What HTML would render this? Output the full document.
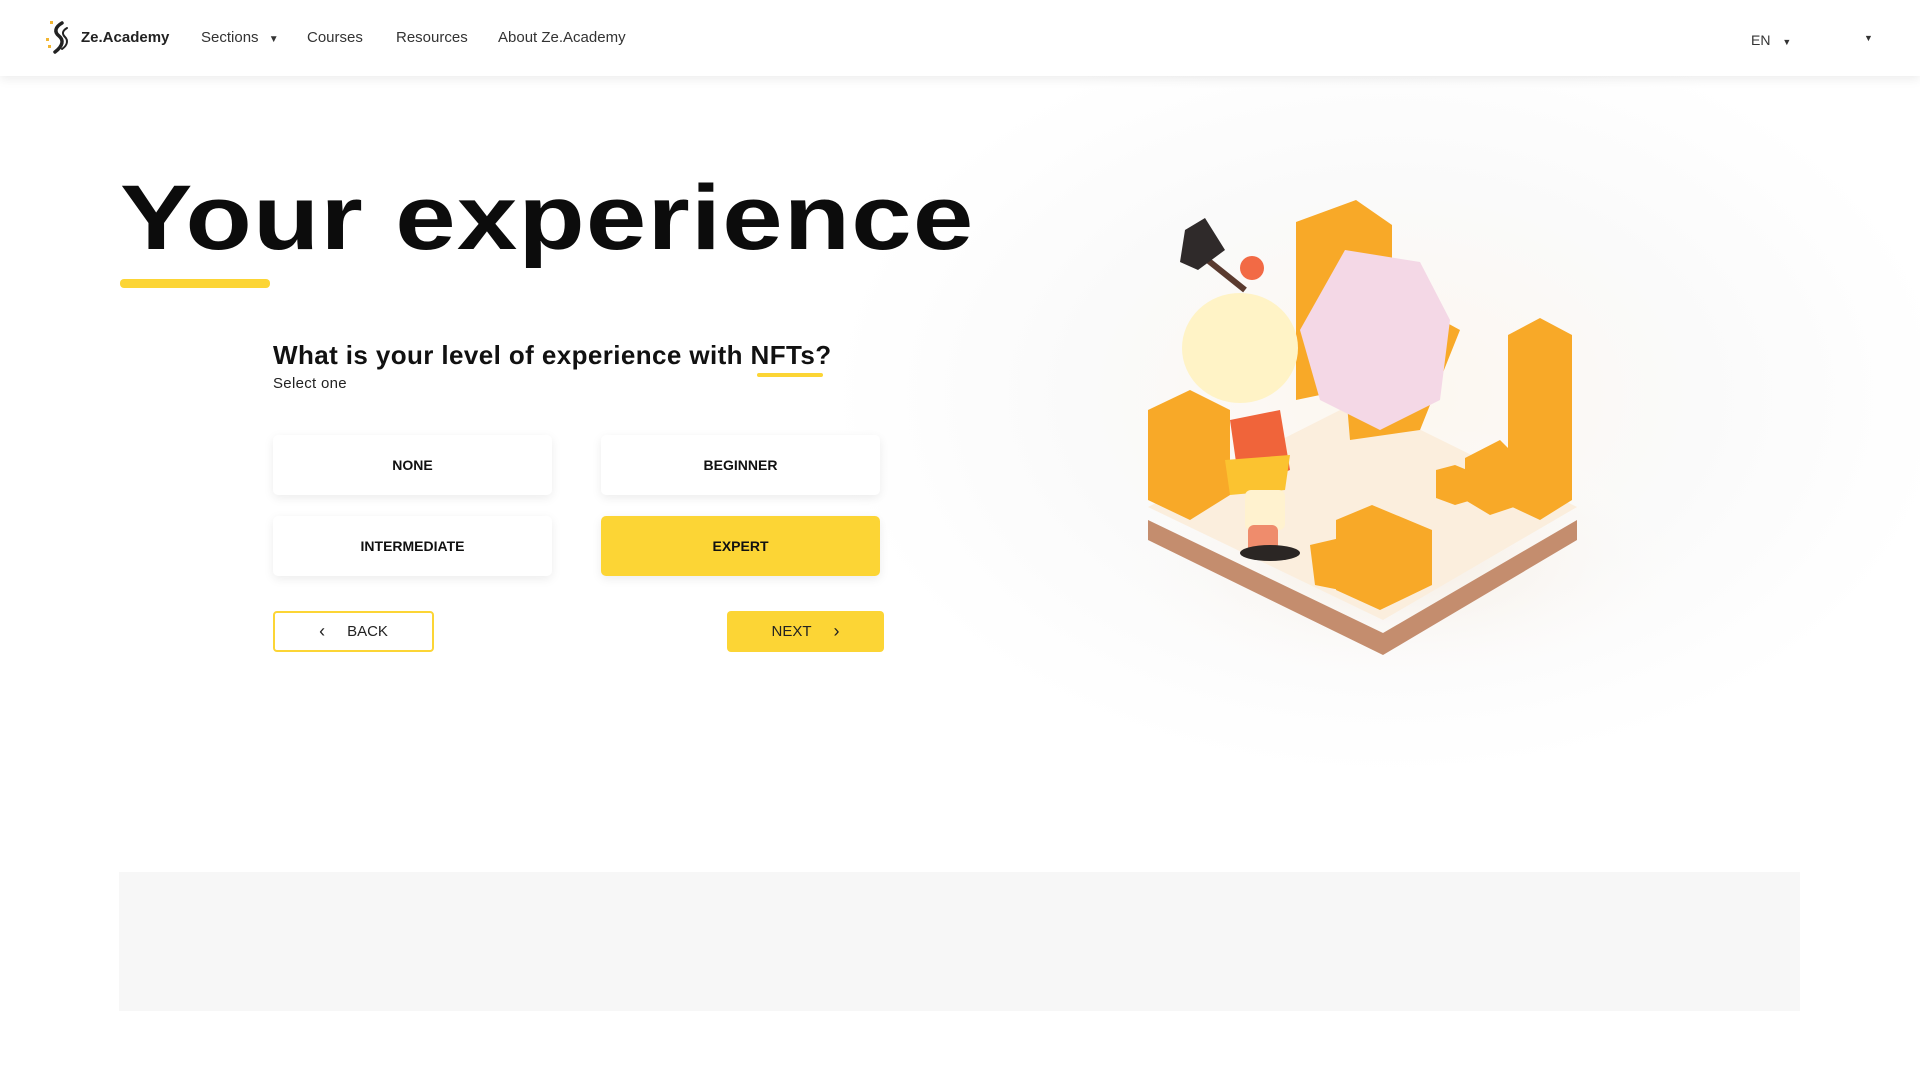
<!DOCTYPE html>
<html><head><meta charset="utf-8"><style>
*{margin:0;padding:0;box-sizing:border-box}
body{width:1920px;height:1079px;overflow:hidden;background:#fff;font-family:"Liberation Sans",sans-serif;color:#111;position:relative}
.bg{position:absolute;left:790px;top:76px;width:1130px;height:720px;background:radial-gradient(ellipse 560px 380px at 600px 320px,#fdf7ef 0%,#fafafa 55%,#fff 100%)}
header{position:absolute;left:0;top:0;width:1920px;height:76px;background:#fff;box-shadow:0 3px 10px rgba(0,0,0,.08);z-index:3}
.nav{position:absolute;top:29px;font-size:15px;color:#333}
h1{position:absolute;left:120px;top:172px;font-size:92px;font-weight:700;line-height:1;letter-spacing:1px;color:#0c0c0c;transform:scaleX(1.18);transform-origin:0 0;white-space:nowrap}
.ul{position:absolute;background:#fcd535;border-radius:4px}
.q{position:absolute;left:273px;top:340px;font-size:26px;font-weight:700;color:#111;letter-spacing:0.4px}
.sel{position:absolute;left:273px;top:375px;font-size:15px;color:#222;letter-spacing:0.3px}
.opt{position:absolute;width:279px;height:60px;background:#fff;border-radius:5px;box-shadow:0 3px 10px rgba(0,0,0,.08);display:flex;align-items:center;justify-content:center;font-size:14px;font-weight:700;color:#111}
.opt.on{background:#fcd535}
.btn{position:absolute;top:611px;height:41px;border-radius:4px;display:flex;align-items:center;justify-content:center;font-size:15px;color:#222}
.grey{position:absolute;left:119px;top:872px;width:1681px;height:139px;background:#f7f7f7}
</style></head><body>
<div class="bg"></div>
<header>
<svg style="position:absolute;left:44px;top:20px" width="30" height="36" viewBox="0 0 30 36">
<path d="M18 3c-7 4-8 9-3 13s4 10-4 16" stroke="#222" stroke-width="3.5" fill="none" stroke-linecap="round"/>
<path d="M23 8c-5 3-5 6-2 9s3 8-3 12" stroke="#222" stroke-width="2" fill="none" stroke-linecap="round"/>
<rect x="6" y="1" width="3" height="3" fill="#f2b632"/><rect x="2" y="18" width="3" height="3" fill="#f2b632"/><rect x="4" y="25" width="3" height="3" fill="#f2b632"/>
</svg>
<div class="nav" style="left:81px;font-weight:700;color:#222">Ze.Academy</div>
<div class="nav" style="left:201px">Sections <span style="font-size:10px;margin-left:6px">▼</span></div>
<div class="nav" style="left:307px">Courses</div>
<div class="nav" style="left:396px">Resources</div>
<div class="nav" style="left:498px">About Ze.Academy</div>
<div class="nav" style="left:1751px;top:32px;font-size:14px">EN <span style="font-size:9px;margin-left:8px">▼</span></div>
<div class="nav" style="left:1864px;top:33px;font-size:9px">▼</div>
</header>
<h1>Your experience</h1>
<div class="ul" style="left:120px;top:279px;width:150px;height:9px"></div>
<div class="q">What is your level of experience with NFTs?</div>
<div class="ul" style="left:757px;top:373px;width:66px;height:4px"></div>
<div class="sel">Select one</div>
<div class="opt" style="left:273px;top:435px">NONE</div>
<div class="opt" style="left:601px;top:435px">BEGINNER</div>
<div class="opt" style="left:273px;top:516px">INTERMEDIATE</div>
<div class="opt on" style="left:601px;top:516px">EXPERT</div>
<div class="btn" style="left:273px;width:161px;border:2px solid #fcd535;background:#fff"><span style="font-size:18px;margin-right:22px">‹</span>BACK</div>
<div class="btn" style="left:727px;width:157px;background:#fcd535">NEXT<span style="font-size:18px;margin-left:22px">›</span></div>
<svg style="position:absolute;left:0;top:0" width="1920" height="1079">
<defs><radialGradient id="sh" cx="0.5" cy="0.5" r="0.5"><stop offset="0" stop-color="#f3e6d6" stop-opacity=".7"/><stop offset="1" stop-color="#fff" stop-opacity="0"/></radialGradient></defs>
<ellipse cx="1400" cy="560" rx="320" ry="140" fill="url(#sh)"/>
<polygon points="1148,520 1383,633 1577,520 1577,540 1383,655 1148,540" fill="#c48d6e"/>
<polygon points="1148,507 1360,400 1577,507 1383,620" fill="#fbeedd"/>
<g fill="#f8a928">
<polygon points="1296,222 1356,200 1392,225 1392,380 1296,400"/>
<polygon points="1148,410 1190,390 1230,410 1230,495 1190,520 1148,500"/>
<polygon points="1508,335 1540,318 1572,335 1572,500 1540,520 1508,505"/>
<polygon points="1465,458 1500,440 1520,460 1520,505 1490,515 1465,500"/>
<polygon points="1336,520 1372,505 1432,530 1432,585 1380,610 1336,590"/>
<polygon points="1310,545 1340,538 1340,590 1315,585"/>
<polygon points="1436,470 1455,465 1472,472 1472,500 1455,505 1436,498"/>
<polygon points="1340,320 1405,300 1460,330 1420,430 1350,440"/>
</g>
<polygon points="1300,330 1345,250 1420,262 1450,320 1440,400 1380,430 1320,400" fill="#f4d8e6"/>
<polygon points="1230,420 1280,410 1290,470 1240,490" fill="#f0643a"/>
<polygon points="1225,460 1290,455 1285,490 1230,495" fill="#fbc330"/>
<rect x="1245" y="490" width="40" height="40" rx="6" fill="#fff2cf"/>
<rect x="1248" y="525" width="30" height="28" rx="6" fill="#ef8c6c"/>
<ellipse cx="1270" cy="553" rx="30" ry="8" fill="#2b2624"/>
<ellipse cx="1240" cy="348" rx="58" ry="55" fill="#fff3c6"/>
<line x1="1205" y1="258" x2="1245" y2="290" stroke="#5a3a2e" stroke-width="6"/>
<polygon points="1185,230 1205,218 1225,250 1198,270 1180,262" fill="#2f2a2a"/>
<circle cx="1252" cy="268" r="12" fill="#f26a45"/>
</svg>
<div class="grey"></div>
</body></html>
